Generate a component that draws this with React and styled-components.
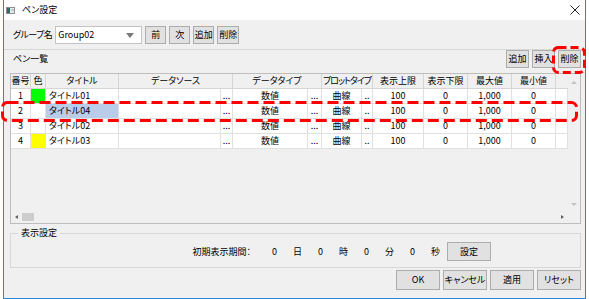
import React from 'react'
import styled, { createGlobalStyle } from 'styled-components'

const GlobalStyle = createGlobalStyle`
  * { box-sizing: border-box; }
  body {
    margin: 0;
    background: #fff;
    color: #000;
    font-family: "Noto Sans CJK JP", "Noto Sans", sans-serif;
    font-size: 9px;
    font-feature-settings: "palt";
  }
`

const COLS = '20px 15px 73px 102px 12px 75px 14px 40px 11px 51px 44px 44px 44px 12px'

const Page = styled.div`
  position: relative;
  width: 589px;
  height: 299px;
`
const Window = styled.div`
  margin-left: 3px;
  width: 583px;
  height: 299px;
  background: #f0f0f0;
  border: 1px solid #2b86d8;
  border-top: none;
  display: flex;
  flex-direction: column;
`
const TitleBar = styled.div`
  height: 20px;
  background: #fff;
  display: flex;
  align-items: center;
  padding: 0 5px 0 2px;
  gap: 7px;
`
const TitleText = styled.span`
  flex: 1;
  line-height: 12px;
`
const Body = styled.div`
  flex: 1;
  display: flex;
  flex-direction: column;
  padding: 6px 4px 0 6px;
`
const Row = styled.div`
  display: flex;
  align-items: center;
  height: ${p => p.$h || 18}px;
  gap: ${p => p.$gap ?? 3}px;
  padding-left: ${p => p.$pl || 0}px;
  justify-content: ${p => p.$justify || 'flex-start'};
  margin-top: ${p => p.$mt || 0}px;
`
const Label = styled.span`
  flex: ${p => (p.$grow ? 1 : 'none')};
  margin-right: ${p => p.$mr || 0}px;
  letter-spacing: ${p => p.$ls || 0}px;
  line-height: 12px;
  white-space: nowrap;
`
const Combo = styled.div`
  width: 87px;
  height: 18px;
  background: #fff;
  border: 1px solid #c3c3c3;
  display: flex;
  align-items: center;
  padding: 0 7px 0 2px;
  line-height: 12px;
  span { flex: 1; }
`
const Arrow = styled.i`
  width: 0;
  height: 0;
  border-style: solid;
  border-color: transparent;
  ${p => p.$dir === 'down' && `border-width: ${p.$s || 5}px ${p.$s || 4}px 0; border-top-color: ${p.$c};`}
  ${p => p.$dir === 'up' && `border-width: 0 ${p.$s || 3}px ${p.$s || 3}px; border-bottom-color: ${p.$c};`}
  ${p => p.$dir === 'left' && `border-width: 2px 3px 2px 0; border-right-color: ${p.$c};`}
  ${p => p.$dir === 'right' && `border-width: 2px 0 2px 3px; border-left-color: ${p.$c};`}
`
const Button = styled.button`
  width: ${p => p.$w}px;
  height: ${p => p.$h || 18}px;
  padding: 0;
  margin: 0;
  font: inherit;
  color: #000;
  line-height: 12px;
  background: #e1e1e1;
  border: 1px solid #adadad;
  white-space: nowrap;
`
const Separator = styled.div`
  margin: 5px -4px 0 -6px;
  border-top: 1px solid #d7d7d7;
`
const Table = styled.div`
  margin-top: 5px;
  height: 151px;
  border: 1px solid #bdbdbd;
  background: #f0f0f0;
  display: grid;
  grid-template-columns: 1fr 12px;
  grid-template-rows: 1fr 12px;
`
const DataArea = styled.div`
  overflow: hidden;
`
const GridRow = styled.div`
  display: grid;
  grid-template-columns: ${COLS};
  height: 15px;
`
const HeadCell = styled.div`
  grid-column: span ${p => p.$span || 1};
  background: #f0f0f0;
  border-right: ${p => (p.$last ? 'none' : '1px solid #d5d5d5')};
  border-bottom: 1px solid #d5d5d5;
  text-align: center;
  line-height: 14px;
  letter-spacing: ${p => (p.$tight ? '-1px' : 'normal')};
  white-space: nowrap;
  overflow: hidden;
`
const Cell = styled.div`
  background: ${p => p.$fill || '#fff'};
  border-right: 1px solid #e0e0e0;
  border-bottom: 1px solid #e0e0e0;
  text-align: ${p => (p.$left ? 'left' : 'center')};
  padding-left: ${p => (p.$left ? 3 : 0)}px;
  line-height: 14px;
  white-space: nowrap;
  overflow: hidden;
`
const VScroll = styled.div`
  display: flex;
  flex-direction: column;
  align-items: center;
  justify-content: space-between;
  padding: 7px 0 5px;
`
const HScroll = styled.div`
  display: flex;
  align-items: center;
  padding: 0 4px;
  gap: 4px;
`
const Thumb = styled.div`
  width: 12px;
  height: 8px;
  background: #cdcdcd;
`
const Spacer = styled.div`
  flex: 1;
`
const Group = styled.fieldset`
  margin: 3px 0 0;
  padding: 0 89px 6px 0;
  min-width: 0;
  border: 1px solid #d7d7d7;
`
const Legend = styled.legend`
  margin-left: 7px;
  padding: 0 3px;
  line-height: 12px;
`
const Unit = styled.span`
  width: 23px;
  text-align: center;
  line-height: 12px;
`
const Overlay = styled.svg`
  position: absolute;
  left: 0;
  top: 0;
  pointer-events: none;
`

const rows = [
  { n: 1, color: '#00ff00', title: 'タイトル01' },
  { n: 2, title: 'タイトル04', selected: true },
  { n: 3, title: 'タイトル02' },
  { n: 4, color: '#ffff00', title: 'タイトル03' },
]

const WindowIcon = () => (
  <svg width="9" height="7" viewBox="0 0 9 7">
    <rect x="0.5" y="0.5" width="8" height="6" fill="#e9ecec" stroke="#8a8f90" />
    <rect x="1" y="1" width="3" height="5" fill="#2e6e62" />
    <line x1="5" y1="3" x2="8" y2="3" stroke="#9aa" />
  </svg>
)

const CloseIcon = () => (
  <svg width="10" height="10" viewBox="0 0 10 10">
    <path d="M0.5 0.5 L9.5 9.5 M9.5 0.5 L0.5 9.5" stroke="#222" strokeWidth="1" />
  </svg>
)

export default function App() {
  return (
    <Page>
      <GlobalStyle />
      <Window>
        <TitleBar>
          <WindowIcon />
          <TitleText>ペン設定</TitleText>
          <CloseIcon />
        </TitleBar>
        <Body>
          <Row $pl={3}>
            <Label $ls={-0.6}>グループ名</Label>
            <Combo>
              <span>Group02</span>
              <Arrow $dir="down" $c="#7a7a7a" />
            </Combo>
            <Button $w={21}>前</Button>
            <Button $w={21}>次</Button>
            <Button $w={21}>追加</Button>
            <Button $w={22}>削除</Button>
          </Row>
          <Separator />
          <Row $pl={3}>
            <Label $grow>ペン一覧</Label>
            <Button $w={23}>追加</Button>
            <Button $w={23}>挿入</Button>
            <Button $w={23}>削除</Button>
          </Row>
          <Table>
            <DataArea>
              <GridRow>
                <HeadCell>番号</HeadCell>
                <HeadCell>色</HeadCell>
                <HeadCell>タイトル</HeadCell>
                <HeadCell $span={2}>データソース</HeadCell>
                <HeadCell $span={2}>データタイプ</HeadCell>
                <HeadCell $span={2} $tight>プロットタイプ</HeadCell>
                <HeadCell>表示上限</HeadCell>
                <HeadCell>表示下限</HeadCell>
                <HeadCell>最大値</HeadCell>
                <HeadCell>最小値</HeadCell>
                <HeadCell $last />
              </GridRow>
              {rows.map(r => (
                <GridRow key={r.n}>
                  <Cell>{r.n}</Cell>
                  <Cell $fill={r.color} />
                  <Cell $left $fill={r.selected ? '#b9cce9' : undefined}>{r.title}</Cell>
                  <Cell />
                  <Cell>...</Cell>
                  <Cell>数値</Cell>
                  <Cell>...</Cell>
                  <Cell>曲線</Cell>
                  <Cell>..</Cell>
                  <Cell>100</Cell>
                  <Cell>0</Cell>
                  <Cell>1,000</Cell>
                  <Cell>0</Cell>
                  <Cell />
                </GridRow>
              ))}
            </DataArea>
            <VScroll>
              <Arrow $dir="up" $c="#c2c2c2" />
              <Arrow $dir="down" $s={3} $c="#c2c2c2" />
            </VScroll>
            <HScroll>
              <Arrow $dir="left" $c="#606060" />
              <Thumb />
              <Spacer />
              <Arrow $dir="right" $c="#606060" />
            </HScroll>
            <div />
          </Table>
          <Group>
            <Legend>表示設定</Legend>
            <Row $h={19} $mt={3} $gap={0} $justify="flex-end">
              <Label $mr={12}>初期表示期間：</Label>
              <Unit>0</Unit>
              <Unit>日</Unit>
              <Unit>0</Unit>
              <Unit>時</Unit>
              <Unit>0</Unit>
              <Unit>分</Unit>
              <Unit>0</Unit>
              <Unit>秒</Unit>
              <Button $w={44} $h={19}>設定</Button>
            </Row>
          </Group>
          <Row $h={20} $mt={2} $justify="flex-end">
            <Button $w={44} $h={20}>OK</Button>
            <Button $w={44} $h={20}>キャンセル</Button>
            <Button $w={44} $h={20}>適用</Button>
            <Button $w={44} $h={20}>リセット</Button>
          </Row>
        </Body>
      </Window>
      <Overlay width="589" height="299">
        <rect x="2.5" y="102.5" width="574" height="18" rx="5" fill="none" stroke="#f00" strokeWidth="3" strokeDasharray="11 5" />
        <rect x="553.5" y="47.5" width="31" height="25" rx="5" fill="none" stroke="#f00" strokeWidth="3" strokeDasharray="8 4" />
      </Overlay>
    </Page>
  )
}
